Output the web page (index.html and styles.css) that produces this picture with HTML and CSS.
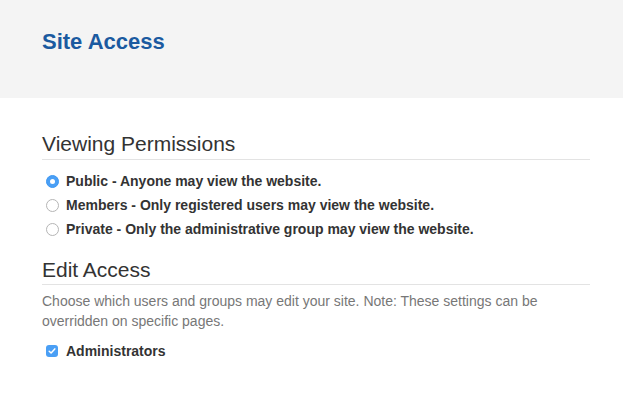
FILE: index.html
```html
<!DOCTYPE html>
<html>
<head>
<meta charset="utf-8">
<link rel="stylesheet" href="styles.css">
</head>
<body>
<header class="page-header">
  <h1 class="page-title">Site Access</h1>
</header>
<main class="content">
  <section class="section">
    <h2 class="section-title">Viewing Permissions</h2>
    <ul class="options radios">
      <li class="option">
        <span class="radio checked"><span class="dot"></span></span>
        <span class="label">Public - Anyone may view the website.</span>
      </li>
      <li class="option">
        <span class="radio"></span>
        <span class="label">Members - Only registered users may view the website.</span>
      </li>
      <li class="option">
        <span class="radio"></span>
        <span class="label">Private - Only the administrative group may view the website.</span>
      </li>
    </ul>
  </section>
  <section class="section">
    <h2 class="section-title">Edit Access</h2>
    <p class="help">Choose which users and groups may edit your site. Note: These settings can be overridden on specific pages.</p>
    <ul class="options checks">
      <li class="option">
        <span class="checkbox">
          <svg width="8" height="8" viewBox="0 0 8 8"><path d="M1.2 4.2 L3.1 6 L6.8 1.9" fill="none" stroke="#fff" stroke-width="1.5" stroke-linecap="round" stroke-linejoin="round"/></svg>
        </span>
        <span class="label">Administrators</span>
      </li>
    </ul>
  </section>
</main>
</body>
</html>
```

FILE: styles.css
```css
* { box-sizing: border-box; }
html, body { margin: 0; padding: 0; background: #fff; }
body {
  font-family: "Liberation Sans", Arial, Helvetica, sans-serif;
  color: #333;
}
.page-header {
  background: #f4f4f4;
  height: 98px;
  padding: 30px 42px 0;
}
.page-title {
  margin: 0;
  font-size: 22px;
  line-height: 24px;
  font-weight: bold;
  color: #1b5aa0;
}
.content {
  padding: 34px 33px 0 42px;
}
.section-title {
  margin: 0;
  font-size: 21px;
  font-weight: normal;
  line-height: 24px;
  color: #333;
  padding-bottom: 3px;
  border-bottom: 1px solid #e3e3e3;
}
.section + .section { margin-top: 17px; }
.section + .section .section-title { padding-bottom: 2px; }
.options {
  list-style: none;
  margin: 0;
  padding: 0;
}
.radios { margin-top: 9px; }
.option {
  display: flex;
  align-items: center;
  height: 24px;
  padding-left: 4px;
}
.label {
  font-size: 14px;
  font-weight: bold;
  color: #333;
  margin-left: 7px;
}
.radio {
  width: 13px;
  height: 13px;
  border-radius: 50%;
  border: 1px solid #b5b5b5;
  background: #fff;
  display: flex;
  align-items: center;
  justify-content: center;
  flex: none;
}
.radio.checked {
  border-color: #3d97f2;
  background: #4a9ff5;
}
.radio .dot {
  width: 5px;
  height: 5px;
  border-radius: 50%;
  background: #fff;
}
.help {
  margin: 6px 0 0;
  font-size: 14px;
  line-height: 20px;
  color: #777;
}
.checks { margin-top: 8px; }
.checkbox {
  width: 12px;
  height: 12px;
  border-radius: 3px;
  background: #4a9ff5;
  display: flex;
  align-items: center;
  justify-content: center;
  flex: none;
}
.checkbox svg { display: block; }
.checks .label { margin-left: 8px; }
```
